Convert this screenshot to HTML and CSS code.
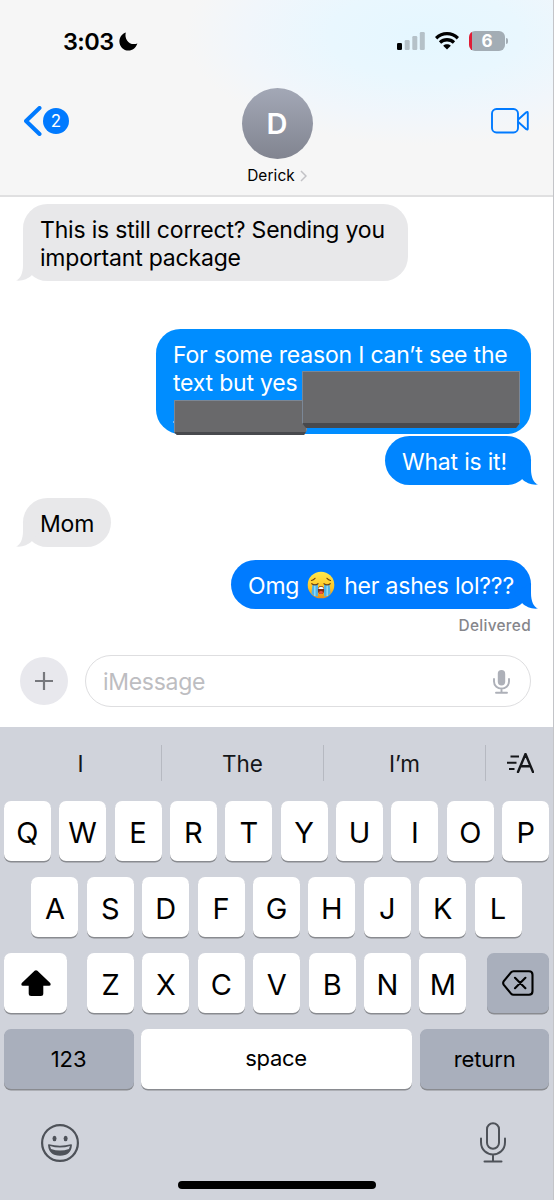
FILE: index.html
```
<!DOCTYPE html>
<html lang="en">
<head>
    <meta charset="UTF-8">
    <meta name="viewport" content="width=device-width, initial-scale=1.0">
    <title>Messages</title>
    <link rel="stylesheet" href="styles.css">
</head>
<body>
    <div class="phone">
        <header class="header">
            <div class="status">
                <div class="time">3:03</div>
                <svg class="moon" width="19" height="19" viewBox="0 0 19 19"><path d="M6.800 .4C5 7.500 10.500 14 18.400 11.500C16.800 16 13.600 18.600 9.500 18.600C4.400 18.600 .4 14.600 .4 9.500C.4 5 3.200 1.500 6.800 .4Z"/></svg>
                <svg class="signal" width="28" height="18" viewBox="0 0 28 18">
                    <rect x="0" y="11" width="5" height="7" rx="1.3" fill="#000"/>
                    <g fill="#b5c1c8"><rect x="7.700" y="8" width="5" height="10" rx="1.300"/><rect x="15.300" y="4" width="5" height="14" rx="1.300"/><rect x="22.800" y="0" width="5" height="18" rx="1.300"/></g>
                </svg>
                <svg class="wifi" width="24" height="18" viewBox="0 0 24 18">
                    <g fill="none" stroke="#000" stroke-width="3.3"><path d="M1.100 6.200C7.300 .2 16.700 .2 22.900 6.200"/><path d="M5 10.500C9 6.800 15 6.800 19 10.500"/></g>
                    <path d="M8.200 13.700C10.300 11.900 13.700 11.900 15.800 13.700L12 17.600Z"/>
                </svg>
                <div class="battery">6</div>
                <div class="battery-tip"></div>
            </div>
            <div class="nav">
                <div class="back">
                    <svg width="18" height="30" viewBox="0 0 18 30"><path d="M15.500 2L2 15L15.500 28" fill="none" stroke="#007aff" stroke-width="4" stroke-linecap="round" stroke-linejoin="round"/></svg>
                    <span class="badge">2</span>
                </div>
                <div class="contact">
                    <div class="avatar">D</div>
                    <div class="name">Derick <svg width="7" height="12" viewBox="0 0 7 12"><path d="M1 1L6 6L1 11" fill="none" stroke="#c2c2c6" stroke-width="1.500"/></svg></div>
                </div>
                <svg class="video" width="38" height="26" viewBox="0 0 38 26"><g fill="none" stroke="#007aff" stroke-width="1.900" stroke-linejoin="round"><rect x="1" y="1" width="26" height="23.500" rx="4.500"/><path d="M27 11.800L35.300 4.200Q36.800 3.300 36.800 5V20.500Q36.800 22.200 35.300 21.300L27 13.700"/></g></svg>
            </div>
        </header>

        <main class="messages">
            <div class="bubble received first">
                <span class="line l1">This is still correct? Sending you</span><span class="line l1">important package</span>
                <svg class="tail" width="24" height="26" viewBox="0 0 24 26"><path d="M7 0V10C7 18 4.500 24 0 25.500C6 26.300 12 24 15.700 20.300L24 10Z"/></svg>
            </div>
            <div class="bubble sent reason">
                <span class="line">For some reason I can’t see the</span><span class="line">text but yes</span>
                <span class="speck"></span>
                <div class="redact small"></div>
                <div class="redact large"></div>
            </div>
            <div class="bubble sent what">
                <span class="line">What is it!</span>
                <svg class="tail" width="24" height="26" viewBox="0 0 24 26"><path d="M7 0V10C7 18 4.500 24 0 25.500C6 26.300 12 24 15.700 20.300L24 10Z"/></svg>
            </div>
            <div class="bubble received mom">
                <span class="line">Mom</span>
                <svg class="tail" width="24" height="26" viewBox="0 0 24 26"><path d="M7 0V10C7 18 4.500 24 0 25.500C6 26.300 12 24 15.700 20.300L24 10Z"/></svg>
            </div>
            <div class="bubble sent omg">
                <span class="word">Omg</span>
                <svg class="emoji" width="28" height="28" viewBox="0 0 28 28" role="img" aria-label="crying">
                    <defs><linearGradient id="face" x2="0" y2="1"><stop offset="0" stop-color="#ffe94d"/><stop offset=".6" stop-color="#ffc625"/><stop offset="1" stop-color="#ee8c15"/></linearGradient></defs>
                    <circle cx="14" cy="14" r="13.300" fill="url(#face)"/>
                    <path d="M5.500 13H11V25.500Q7 26 4.500 22.500ZM17 13H22.500L23.500 22.500Q21 26 17 25.500Z" fill="#4fb4e8"/>
                    <path d="M7.800 14V25M20.200 14V25" stroke="#8fdbfa" stroke-width="1.500"/>
                    <path d="M4.500 9.500Q6.500 9 8 7.300M20 7.300Q21.500 9 23.500 9.500M4.800 12.700Q8 15 11 12.700M17 12.700Q20 15 23.200 12.700" fill="none" stroke="#70410d" stroke-width="1.200" stroke-linecap="round"/>
                    <ellipse cx="14" cy="19" rx="3.100" ry="4" fill="#7d2f13"/>
                    <path d="M11.500 17Q14 14.500 16.500 17V18H11.500Z" fill="#fff"/>
                    <ellipse cx="14" cy="21.500" rx="2" ry="1.400" fill="#ee5140"/>
                </svg>
                <span class="rest">her ashes lol???</span>
                <svg class="tail" width="24" height="26" viewBox="0 0 24 26"><path d="M7 0V10C7 18 4.500 24 0 25.500C6 26.300 12 24 15.700 20.300L24 10Z"/></svg>
            </div>
            <div class="delivered">Delivered</div>
        </main>

        <div class="composer">
            <div class="plus"><svg width="18" height="18" viewBox="0 0 18 18"><path d="M9 0V18M0 9H18" stroke="#77787d" stroke-width="2.200"/></svg></div>
            <div class="field">
                <span>iMessage</span>
                <svg width="17" height="24" viewBox="0 0 17 24"><rect x="4.800" y="0" width="7.400" height="15.500" rx="3.700" fill="#adb0b8"/><path d="M1 9V11.500C1 21 16 21 16 11.500V9M8.500 18.500V22.500M3 22.700H14" fill="none" stroke="#adb0b8" stroke-width="1.900" stroke-linecap="round"/></svg>
            </div>
        </div>

        <section class="keyboard">
            <div class="suggestions">
                <div>I</div><div>The</div><div>I’m</div>
                <div class="format"><svg width="27" height="20" viewBox="0 0 27 20"><path d="M3.500 3.500H12M0 9.700H9.500M2 16H7.500" stroke="#15171a" stroke-width="1.900"/><path d="M11 19L18.500 1L26 19M14 13.200H23.300" fill="none" stroke="#15171a" stroke-width="2.400" stroke-linejoin="round" stroke-linecap="round"/></svg></div>
            </div>
            <div class="row">
                <div class="key">Q</div><div class="key">W</div><div class="key">E</div><div class="key">R</div><div class="key">T</div><div class="key">Y</div><div class="key">U</div><div class="key">I</div><div class="key">O</div><div class="key">P</div>
            </div>
            <div class="row">
                <div class="key">A</div><div class="key">S</div><div class="key">D</div><div class="key">F</div><div class="key">G</div><div class="key">H</div><div class="key">J</div><div class="key">K</div><div class="key">L</div>
            </div>
            <div class="row">
                <div class="key shift"><svg width="30" height="26" viewBox="0 0 30 26"><path d="M13.600 .8Q15 -.4 16.400 .8L29.200 13Q30.500 15.500 28 15.800H22.300V23.500Q22.300 26 19.800 26H10.200Q7.700 26 7.700 23.500V15.800H2Q-.5 15.500 .8 13Z"/></svg></div>
                <div class="key">Z</div><div class="key">X</div><div class="key">C</div><div class="key">V</div><div class="key">B</div><div class="key">N</div><div class="key">M</div>
                <div class="key gray delete"><svg width="32" height="26" viewBox="0 0 32 26"><path d="M11.500 1.200H27Q30.500 1.200 30.500 4.700V21.300Q30.500 24.800 27 24.800H11.500Q10 24.800 9 23.600L1.800 14.800Q.5 13 1.800 11.200L9 2.400Q10 1.200 11.500 1.200ZM13 7.800L23.400 18.200M23.400 7.800L13 18.200" fill="none" stroke="#000" stroke-width="2.100" stroke-linecap="round"/></svg></div>
            </div>
            <div class="row">
                <div class="key gray wide">123</div>
                <div class="key space">space</div>
                <div class="key gray return">return</div>
            </div>
            <div class="bottom">
                <svg width="38" height="38" viewBox="0 0 38 38"><circle cx="19" cy="19" r="17.900" fill="none" stroke="#4e5259" stroke-width="2.200"/><ellipse cx="13.500" cy="14.500" rx="2" ry="2.700" fill="#4e5259"/><ellipse cx="24.600" cy="14.500" rx="2" ry="2.700" fill="#4e5259"/><path d="M7.800 21Q19 24 30.200 21Q29.500 31 19 31Q8.500 31 7.800 21Z" fill="#4e5259" stroke="#4e5259" stroke-width="1.500" stroke-linejoin="round"/><path d="M9 22Q19 25 29 22L28 25Q19 28 10 25Z" fill="#d0d3db"/></svg>
                <svg class="dictate" width="28" height="41" viewBox="0 0 28 41"><g fill="none" stroke="#4e5259" stroke-width="2" stroke-linecap="round"><rect x="8" y="1.200" width="12" height="25.500" rx="6"/><path d="M2 16.500V20C2 36.500 26 36.500 26 20V16.500M14 32.500V39M5.500 39.500H22.500"/></g></svg>
            </div>
            <div class="home"></div>
        </section>
    </div>
</body>
</html>
```
FILE: styles.css
```
* {
    box-sizing: border-box;
}

body {
    margin: 0;
    background: #fff;
    font-family: 'Inter', sans-serif;
    color: #000;
}

svg {
    display: block;
    flex-shrink: 0;
}

.phone {
    width: 554px;
    height: 1200px;
    display: flex;
    flex-direction: column;
    overflow: hidden;
    border-right: 1px solid #c3c4c8;
}

.header {
    height: 197px;
    flex-shrink: 0;
    border-bottom: 2px solid #e0e0e1;
    background: radial-gradient(ellipse 240px 110px at 425px 35px, #e5f7ff 0%, #e9f7fe 40%, #f1f6fb 75%, #f6f6f6 100%) #f6f6f6;
}

.status {
    display: flex;
    height: 82px;
    padding-left: 63px;
    align-items: center;
}

.time {
    width: 56px;
    font-size: 23.5px;
    font-weight: 600;
    letter-spacing: -0.6px;
    white-space: nowrap;
}

.signal {
    margin-left: 259px;
}

.wifi {
    margin-left: 10px;
}

.battery {
    width: 36px;
    height: 20px;
    margin-left: 10px;
    border-radius: 6px;
    background: linear-gradient(90deg, #e01d36 3px, #a3adb5 3px);
    color: #fff;
    font-size: 17px;
    font-weight: 700;
    line-height: 20px;
    text-align: center;
}

.battery-tip {
    width: 2px;
    height: 6px;
    margin-left: 1px;
    border-radius: 0 2px 2px 0;
    background: #a3adb5;
}

.nav {
    display: flex;
    justify-content: space-between;
    padding: 6px 24px 0;
}

.back {
    display: flex;
    width: 84px;
    align-items: center;
    height: 66px;
}

.badge {
    width: 26px;
    height: 26px;
    margin-left: 1px;
    border-radius: 50%;
    background: #007aff;
    color: #fff;
    font-size: 17px;
    line-height: 26px;
    text-align: center;
}

.contact {
    display: flex;
    flex-direction: column;
    align-items: center;
    margin-left: -45px;
}

.avatar {
    width: 71px;
    height: 71px;
    border-radius: 50%;
    background: linear-gradient(#a3a8b6, #818490);
    color: #fff;
    font-size: 29px;
    font-weight: 600;
    line-height: 72px;
    text-align: center;
}

.name {
    display: flex;
    align-items: center;
    gap: 5px;
    margin-top: 6px;
    font-size: 15.4px;
    line-height: 21px;
    letter-spacing: 0.1px;
}

.video {
    margin-top: 20px;
}

.messages {
    height: 452px;
    flex-shrink: 0;
    padding: 7px 22px 0 23px;
    display: flex;
    flex-direction: column;
    align-items: flex-start;
}

.bubble {
    position: relative;
    flex-shrink: 0;
    padding: 12px 17px 9px;
    border-radius: 24.5px;
    font-size: 23px;
    line-height: 28px;
    letter-spacing: -0.2px;
    white-space: nowrap;
}

.line {
    display: block;
}

.received {
    background: #e8e8ea;
}

.sent {
    align-self: flex-end;
    color: #fff;
}

.tail {
    position: absolute;
    left: -7px;
    bottom: 0;
    fill: #e8e8ea;
}

.sent .tail {
    left: auto;
    right: -7px;
    transform: scaleX(-1);
    fill: #0085ff;
}

.first {
    width: 385px;
    height: 77px;
}

.reason {
    width: 375px;
    height: 105px;
    margin-top: 48px;
    background: #008dff;
}

.what {
    width: 146px;
    height: 49px;
    margin-top: 2px;
    background: #0085ff;
}

.mom {
    width: 88px;
    height: 49px;
    margin-top: 13px;
}

.omg {
    display: flex;
    width: 300px;
    height: 49px;
    margin-top: 13px;
    background: #007bff;
}

.omg .tail {
    fill: #007bff;
}

.emoji {
    margin-top: -1px;
}

.word {
    width: 60px;
}

.rest {
    margin-left: 9px;
}

.redact {
    position: absolute;
    background: #69696b;
    border: 1px solid #7b8796;
}

/* bevelled covers over the hidden address */
.small {
    left: 18px;
    top: 71px;
    width: 133px;
    height: 35px;
    border-bottom: 3px solid #48494d;
    clip-path: polygon(0 0, 100% 0, 100% 30px, 130px 100%, 3px 100%, 0 32px);
}

.large {
    left: 146px;
    top: 42px;
    width: 218px;
    height: 57px;
    border-bottom: 5px solid #48494d;
    clip-path: polygon(0 0, 100% 0, 100% 52px, 214px 100%, 4px 100%, 0 52px);
}

.speck {
    position: absolute;
    left: 17px;
    top: 92px;
    width: 2px;
    height: 2px;
    background: #70bdff;
}

.delivered {
    align-self: flex-end;
    margin-top: 7px;
    color: #86868b;
    font-size: 15.4px;
    font-weight: 500;
    line-height: 20px;
    letter-spacing: 0.3px;
}

.composer {
    height: 78px;
    flex-shrink: 0;
    display: flex;
    align-items: center;
    gap: 17px;
    padding: 0 22px 14px 20px;
}

.plus {
    display: flex;
    align-items: center;
    justify-content: center;
    width: 48px;
    height: 48px;
    border-radius: 50%;
    background: #e8e8ed;
}

.field {
    display: flex;
    flex: 1;
    align-items: center;
    justify-content: space-between;
    height: 52px;
    padding: 1px 20px 0 17px;
    border: 1.5px solid #dedee0;
    border-radius: 26px;
    color: #bdbdc1;
    font-size: 23px;
    letter-spacing: -0.3px;
}

.keyboard {
    height: 473px;
    flex-shrink: 0;
    background: #d0d3db;
}

.suggestions {
    display: flex;
    height: 36px;
    margin: 18px 0 20px;
}

.suggestions div {
    width: 162px;
    border-right: 1px solid #b6b9c1;
    color: #15171a;
    font-size: 22.5px;
    line-height: 37px;
    text-align: center;
}

.suggestions .format {
    display: flex;
    width: 67px;
    padding-left: 21px;
    align-items: center;
    border: 0;
}

.row {
    display: flex;
    justify-content: center;
    gap: 8.4px;
    height: 60px;
    margin-bottom: 16px;
}

.key {
    display: flex;
    align-items: center;
    justify-content: center;
    width: 47px;
    height: 60px;
    border-radius: 7px;
    background: #fff;
    box-shadow: 0 1.5px 0 #898b90;
    font-size: 29px;
    padding-top: 2px;
}

.gray {
    background: #a9afbc;
}

.shift {
    width: 63px;
    margin-right: 11.5px;
    padding: 0;
}

.delete {
    width: 62px;
    margin-left: 12px;
    padding: 0 0 1px;
}

.wide {
    width: 130px;
    margin-right: -1.5px;
    padding: 0;
    font-size: 22px;
}

.space {
    width: 271px;
    padding: 0 0 3px;
    font-size: 22px;
    letter-spacing: -0.3px;
}

.return {
    width: 129.5px;
    padding: 0;
    font-size: 22px;
    letter-spacing: -0.1px;
}

.bottom {
    display: flex;
    justify-content: space-between;
    align-items: center;
    height: 76px;
    padding: 0 46px 0 41px;
}

.dictate {
    margin-top: -2px;
}

.home {
    width: 198px;
    height: 8px;
    margin: 0 auto;
    border-radius: 4px;
    background: #000;
}
```
